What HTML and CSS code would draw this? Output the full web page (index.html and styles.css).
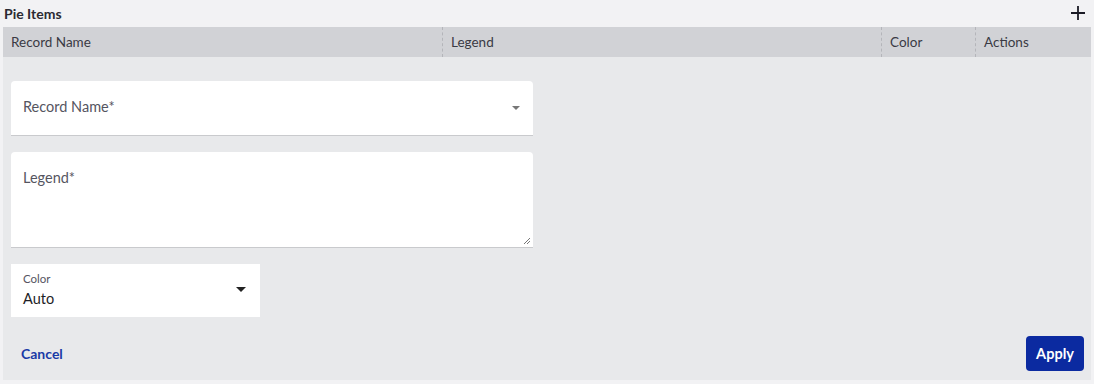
FILE: index.html
```html
<!DOCTYPE html>
<html lang="en">
<head>
  <meta charset="UTF-8" />
  <meta name="viewport" content="width=device-width, initial-scale=1.0" />
  <title>Pie Items</title>
  <link rel="stylesheet" href="styles.css">
</head>
<body>
  <div class="pie-items">
    <div class="section-head">
      <h2>Pie Items</h2>
      <span class="add-btn">
        <svg width="16" height="16" viewBox="0 0 16 16"><path d="M8 1v14M1 8h14" stroke="#1b1b25" stroke-width="1.8" fill="none"/></svg>
      </span>
    </div>

    <div class="table-head">
      <div class="col col-name">Record Name</div>
      <div class="col col-legend">Legend</div>
      <div class="col col-color">Color</div>
      <div class="col col-actions">Actions</div>
    </div>

    <div class="edit-panel">
      <div class="field select-field">
        <span class="placeholder">Record Name*</span>
        <span class="caret light"></span>
      </div>

      <div class="field textarea-field">
        <span class="placeholder">Legend*</span>
        <svg class="grip" width="8" height="8" viewBox="0 0 8 8"><path d="M1 7L7 1M4 7L7 4" stroke="#777" stroke-width="1" fill="none"/></svg>
      </div>

      <div class="field color-field">
        <div class="color-value">
          <span class="small-label">Color</span>
          <span class="value">Auto</span>
        </div>
        <span class="caret"></span>
      </div>

      <div class="panel-actions">
        <a href="#" class="cancel">Cancel</a>
        <button type="button" class="apply">Apply</button>
      </div>
    </div>
  </div>
</body>
</html>
```

FILE: styles.css
```css
body {
  margin: 0;
  background: #f2f2f4;
  font-family: 'Lato', 'Open Sans', sans-serif;
  color: #2b2b33;
}

.pie-items {
  padding: 0 3px;
}

.section-head {
  display: flex;
  align-items: center;
  justify-content: space-between;
  height: 27px;
}

.section-head h2 {
  margin: 0 0 0 1px;
  font-size: 14px;
  font-weight: 700;
  color: #2b2b33;
}

.add-btn {
  display: flex;
  margin-right: 5px;
  margin-top: -2px;
}

.table-head {
  display: flex;
  height: 30px;
  background: #d1d2d6;
  font-size: 13.5px;
  color: #3a3a44;
}

.col {
  display: flex;
  align-items: center;
  padding-left: 8px;
  box-sizing: border-box;
}

.col + .col {
  border-left: 1px dashed #b4b5ba;
}

.col-name { width: 439px; }
.col-legend { width: 439px; }
.col-color { width: 94px; }
.col-actions { flex: 1; }

.edit-panel {
  background: #e8e9eb;
  padding: 24px 8px 9px;
  height: 323px;
  box-sizing: border-box;
  display: flex;
  flex-direction: column;
}

.field {
  background: #fff;
  box-sizing: border-box;
  position: relative;
}

.select-field {
  width: 522px;
  height: 55px;
  border-radius: 4px 4px 0 0;
  border-bottom: 1px solid #c9cacd;
  display: flex;
  align-items: center;
  justify-content: space-between;
  padding: 0 13px 3px 12px;
}

.select-field .caret {
  margin-top: 3px;
}

.placeholder {
  font-size: 14.5px;
  color: #55555f;
}

.caret {
  width: 0;
  height: 0;
  border-left: 5px solid transparent;
  border-right: 5px solid transparent;
  border-top: 5px solid #222;
}

.caret.light {
  border-left-width: 4px;
  border-right-width: 4px;
  border-top: 4px solid #777;
}

.textarea-field {
  width: 522px;
  height: 96px;
  margin-top: 16px;
  border-radius: 4px 4px 0 0;
  border-bottom: 1px solid #c9cacd;
  padding: 15px 12px 0;
}

.grip {
  position: absolute;
  right: 2px;
  bottom: 2px;
}

.color-field {
  width: 249px;
  height: 53px;
  margin-top: 16px;
  display: flex;
  align-items: center;
  justify-content: space-between;
  padding: 0 14px 0 12px;
}

.color-value {
  display: flex;
  flex-direction: column;
  margin-top: -1px;
}

.small-label {
  font-size: 11.5px;
  color: #55555f;
  line-height: 14px;
}

.value {
  font-size: 14.5px;
  color: #1e1e26;
  line-height: 20px;
  margin-top: 3px;
}

.color-field .caret {
  margin-top: -2px;
}

.panel-actions {
  margin-top: auto;
  display: flex;
  align-items: center;
  justify-content: space-between;
  padding-left: 10px;
}

.cancel {
  font-size: 14px;
  font-weight: 700;
  color: #1a3aa6;
  text-decoration: none;
}

.apply {
  width: 58px;
  height: 35px;
  background: #0b2aa0;
  color: #fff;
  border: none;
  border-radius: 4px;
  font-family: inherit;
  font-size: 14.5px;
  font-weight: 700;
  margin-right: -1px;
  cursor: pointer;
}
```
